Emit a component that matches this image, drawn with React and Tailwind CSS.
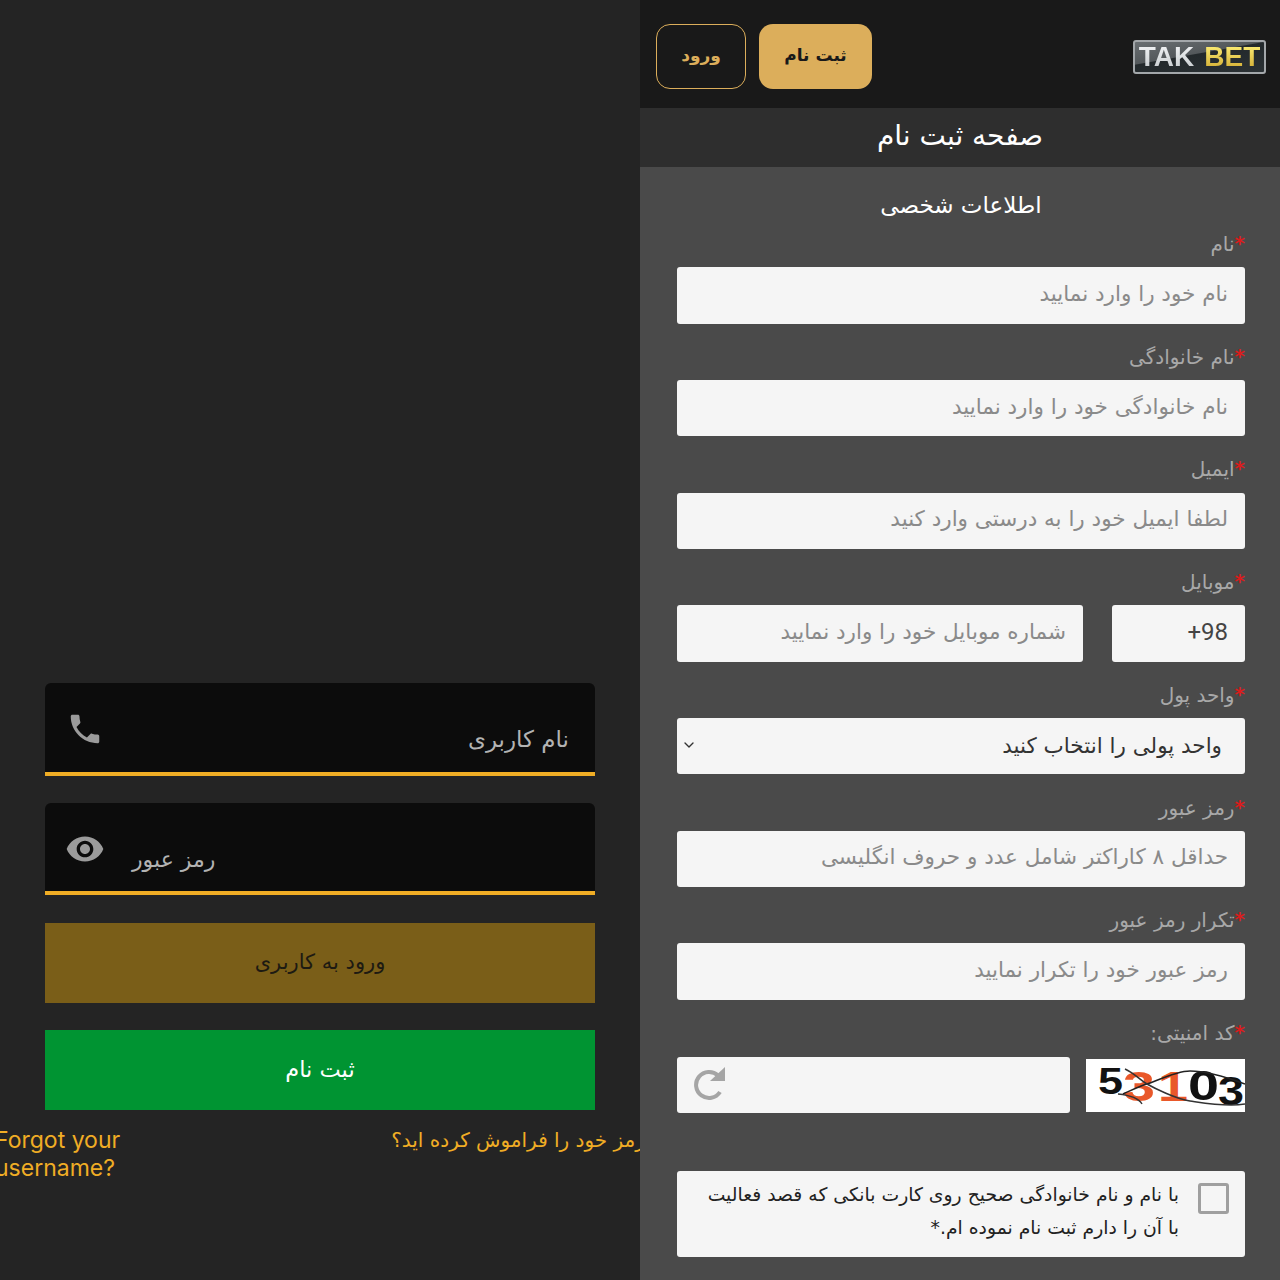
import { LuChevronDown } from "react-icons/lu"
import { MdPhone, MdVisibility } from "react-icons/md"

const fa = "font-['DejaVu_Sans','Noto_Sans',sans-serif]"

const Logo = () => (
    <div className="mt-[2px] flex h-[34px] w-[133px] items-center justify-center overflow-hidden rounded-[3px] border-2 border-[#a3a7aa] bg-[linear-gradient(170deg,#6a6f72_0%,#53585b_42%,#23292c_44%,#2b3134_100%)] font-['Liberation_Sans',sans-serif] text-[28px] leading-none font-bold">
        <span className="bg-[linear-gradient(#f4f6f7,#c5cacd)] bg-clip-text text-transparent">TAK</span>
        <span className="ml-[10px] bg-[linear-gradient(#fff27a,#d0a92f)] bg-clip-text text-transparent">BET</span>
    </div>
)

const Captcha = () => (
    <svg className="h-[53px] w-[159px] shrink-0 bg-white" viewBox="0 0 159 53">
        <text x="12" y="35" textLength="25" lengthAdjust="spacingAndGlyphs" fontFamily="Liberation Sans" fontWeight="700" fontSize="36" fill="#111">5</text>
        <text x="37" y="42" textLength="32" lengthAdjust="spacingAndGlyphs" fontFamily="Liberation Sans" fontWeight="700" fontSize="42" fill="#e9582a">3</text>
        <text x="72" y="42" textLength="30" lengthAdjust="spacingAndGlyphs" fontFamily="Liberation Sans" fontWeight="700" fontSize="42" fill="#e9582a">1</text>
        <text x="102" y="41" textLength="31" lengthAdjust="spacingAndGlyphs" fontFamily="Liberation Sans" fontWeight="700" fontSize="42" fill="#111">0</text>
        <text x="132" y="46" textLength="26" lengthAdjust="spacingAndGlyphs" fontFamily="Liberation Sans" fontWeight="700" fontSize="40" fill="#111">3</text>
        <path d="M37 35C48 30 54 27 61 25S90 12 104 12S140 18 159 25" fill="none" stroke="#222" strokeWidth="1.6" />
        <path d="M39 10C48 14 54 21 61 25S90 40 104 42S140 48 159 45" fill="none" stroke="#333" strokeWidth="1.6" />
        <path d="M32 35C42 36 52 38 56 45" fill="none" stroke="#333" strokeWidth="1.4" />
    </svg>
)

const Refresh = () => (
    <svg className="h-[33px] w-[31px]" viewBox="0 0 31 33" fill="#a5a5a5">
        <path d="M26 25A13 13 0 1 1 24 8.5" fill="none" stroke="#a5a5a5" strokeWidth="4" />
        <polygon points="16,14 31,14 31,0" />
    </svg>
)

const Label = ({ children }) => (
    <div className="flex h-[56.2px] items-center justify-start pt-[10px] text-[20px] text-[#a8a8a8]" dir="rtl">
        <span className="relative top-[-1px] text-[20px] leading-none font-bold text-[#d91c1c]">*</span>
        <span>{children}</span>
    </div>
)

const Box = ({ className = "", children }) => (
    <div className={`flex h-[56.5px] items-center rounded-[3px] bg-[#f5f5f5] pb-[3px] text-[21.5px] text-[#8a8a8a] ${className}`} dir="rtl">
        {children}
    </div>
)

const fields = [
    ["نام", "نام خود را وارد نمایید"],
    ["نام خانوادگی", "نام خانوادگی خود را وارد نمایید"],
    ["ایمیل", "لطفا ایمیل خود را به درستی وارد کنید"],
]

const LoginPanel = () => (
    <div className="flex h-[1280px] w-[640px] shrink-0 flex-col overflow-hidden bg-[#242424] pt-[683px]">
        <div className="mx-[45px] flex h-[93px] items-start justify-between rounded-t-[6px] border-b-[4px] border-[#f0ad25] bg-[#0c0c0c] pt-[26px] pr-[26px] pl-[21px]">
            <MdPhone className="mt-[1px] size-[38px] text-[#9b9b9b]" />
            <span className="pt-[13px] text-[23px] text-[#b3b3b3]" dir="rtl">نام کاربری</span>
        </div>
        <div className="mx-[45px] mt-[27px] flex h-[92px] items-start gap-[27px] rounded-t-[6px] border-b-[4px] border-[#f0ad25] bg-[#0c0c0c] pt-[26px] pl-[20px]">
            <MdVisibility className="size-[40px] text-[#9b9b9b]" />
            <span className="pt-[14px] text-[22px] text-[#b3b3b3]" dir="rtl">رمز عبور</span>
        </div>
        <button className="mx-[45px] mt-[28px] h-[80px] bg-[#7a5e18] text-[21px] text-[#1d1a12]" dir="rtl">ورود به کاربری</button>
        <button className="mx-[45px] mt-[27px] h-[80px] bg-[#009432] text-[22.5px] text-white" dir="rtl">ثبت نام</button>
        <div className="mt-[16px] flex items-start justify-between leading-[28px] text-[#f0ad25]">
            <a href="#" className="-ml-[5px] w-[130px] shrink-0 font-['Inter',sans-serif] text-[23px]">Forgot your username?</a>
            <a href="#" className="-mr-[5px] text-[20px] whitespace-nowrap" dir="rtl">رمز خود را فراموش کرده اید؟</a>
        </div>
    </div>
)

const RegisterPanel = () => (
    <div className="flex h-[1280px] w-[640px] shrink-0 flex-col overflow-hidden bg-[#4a4a4a]">
        <header className="flex h-[108px] items-center justify-between bg-[#191919] pt-[4px] pr-[14px] pl-[16px]">
            <div className="flex items-center gap-[13px]">
                <button className="h-[65px] w-[90px] rounded-[14px] border border-[#dcae5b] text-[17px] font-bold text-[#dcae5b]">ورود</button>
                <button className="h-[65px] w-[113px] rounded-[14px] bg-[#dcae5b] text-[17px] font-bold text-[#191919]">ثبت نام</button>
            </div>
            <Logo />
        </header>
        <h1 className="flex h-[59px] items-center justify-center bg-[#2e2e2e] pb-[4px] text-[28px] text-white">صفحه ثبت نام</h1>
        <div className="flex-1 px-[37px] pr-[35px]">
            <h2 className="flex h-[76px] items-center justify-center text-[23px] text-white">اطلاعات شخصی</h2>
            <div className="-mt-[32px]">
                {fields.map(([label, hint]) => (
                    <div key={label}>
                        <Label>{label}</Label>
                        <Box className="pr-[17px]">{hint}</Box>
                    </div>
                ))}
                <Label>موبایل</Label>
                <div className="flex flex-row-reverse gap-[29px]">
                    <Box className="w-[133px] justify-start px-[17px] font-['Roboto',sans-serif] text-[24px] text-[#444]"><span dir="ltr">+98</span></Box>
                    <Box className="flex-1 pr-[17px]">شماره موبایل خود را وارد نمایید</Box>
                </div>
                <Label>واحد پول</Label>
                <Box className="justify-between pt-[3px] pr-[23px] pb-0 pl-[4px] text-[20px] text-[#333]">
                    <span>واحد پولی را انتخاب کنید</span>
                    <LuChevronDown className="mb-[3px] size-[16px] text-[#333]" />
                </Box>
                <Label>رمز عبور</Label>
                <Box className="pr-[17px]">حداقل ۸ کاراکتر شامل عدد و حروف انگلیسی</Box>
                <Label>تکرار رمز عبور</Label>
                <Box className="pr-[17px]">رمز عبور خود را تکرار نمایید</Box>
                <Label>کد امنیتی:</Label>
                <div className="mt-[1px] flex flex-row-reverse items-center gap-[16px]">
                    <Captcha />
                    <div className="flex h-[56px] flex-1 items-center rounded-[3px] bg-[#f5f5f5] pb-[3px] pl-[17px]">
                        <Refresh />
                    </div>
                </div>
                <div className="mt-[58px] flex h-[86px] items-start gap-[19px] rounded-[3px] bg-[#f5f5f5] pt-[7px] pr-[16px] pl-[20px] text-[#222]" dir="rtl">
                    <span className="mt-[5px] size-[31px] shrink-0 rounded-[3px] border-[3px] border-[#9f9f9f]" />
                    <p className="text-[18.8px] leading-[33px]">با نام و نام خانوادگی صحیح روی کارت بانکی که قصد فعالیت با آن را دارم ثبت نام نموده ام.*</p>
                </div>
            </div>
        </div>
    </div>
)

export default function App() {
    return (
        <div className={`flex h-[1280px] w-[1280px] overflow-hidden ${fa}`}>
            <LoginPanel />
            <RegisterPanel />
        </div>
    )
}
